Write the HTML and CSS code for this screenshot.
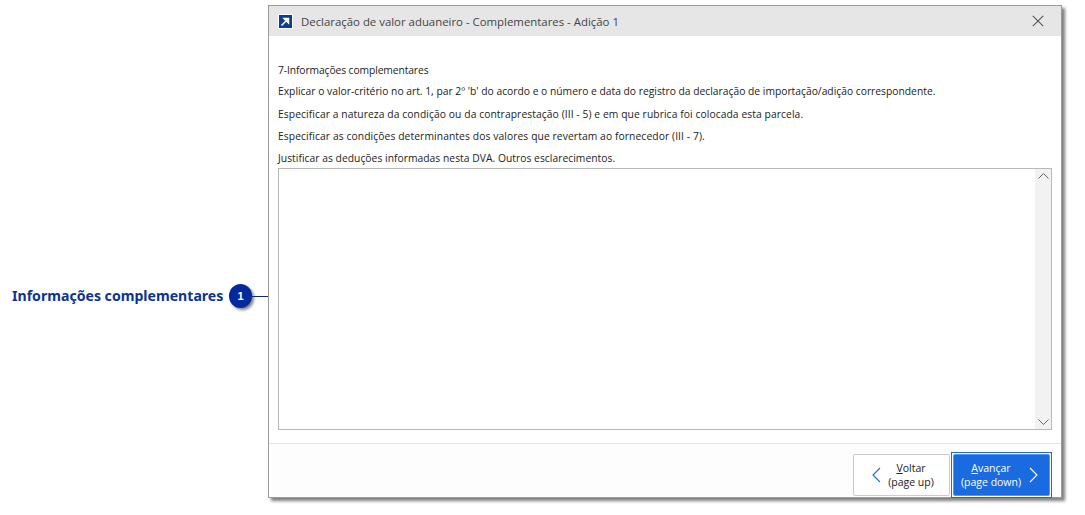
FILE: index.html
```html
<!DOCTYPE html>
<html lang="pt-BR">
<head>
<meta charset="utf-8">
<title>Declaração de valor aduaneiro</title>
<link rel="stylesheet" href="styles.css">
</head>
<body>
<main class="page">
  <div class="callout">
    <span class="callout-label">Informações complementares</span>
    <span class="badge">1</span>
    <span class="leader"></span>
  </div>
  <section class="window">
    <header class="titlebar">
      <svg class="app-icon" width="15" height="15" viewBox="0 0 15 15" aria-hidden="true">
        <rect width="15" height="15" fill="#fff"/>
        <rect x="1" y="1" width="13" height="13" fill="#0b3d91"/>
        <path d="M3.5 11.5L9 6M6 4.5h4.5V9z" stroke="#fff" stroke-width="1.5" fill="#fff"/>
      </svg>
      <h1 class="title">Declaração de valor aduaneiro - Complementares - Adição 1</h1>
      <svg class="close" width="12" height="12" viewBox="0 0 12 12" aria-hidden="true">
        <path d="M.8.8l10.4 10.4M11.2.8L.8 11.2" stroke="#555" stroke-width="1.1" fill="none"/>
      </svg>
    </header>
    <div class="content">
      <p class="line first">7-Informações complementares</p>
      <p class="line second">Explicar o valor-critério no art. 1, par 2º 'b' do acordo e o número e data do registro da declaração de importação/adição correspondente.</p>
      <p class="line third">Especificar a natureza da condição ou da contraprestação (III - 5) e em que rubrica foi colocada esta parcela.</p>
      <p class="line fourth">Especificar as condições determinantes dos valores que revertam ao fornecedor (III - 7).</p>
      <p class="line fifth">Justificar as deduções informadas nesta DVA. Outros esclarecimentos.</p>
      <div class="memo">
        <div class="memo-text"></div>
        <div class="scrollbar">
          <svg width="11" height="6" viewBox="0 0 11 6" aria-hidden="true"><path d="M.5 5.5l5-5 5 5" stroke="#666" fill="none"/></svg>
          <svg width="11" height="6" viewBox="0 0 11 6" aria-hidden="true"><path d="M.5.5l5 5 5-5" stroke="#666" fill="none"/></svg>
        </div>
      </div>
    </div>
    <footer class="footer">
      <button class="btn" type="button">
        <svg width="9" height="16" viewBox="0 0 9 16" aria-hidden="true"><path d="M8 1L1 8l7 7" stroke="#1a6ae0" stroke-width="1.1" fill="none"/></svg>
        <span class="btn-text"><u>V</u>oltar<br>(page up)</span>
      </button>
      <div class="focus-ring">
        <button class="btn primary" type="button">
          <span class="btn-text"><u>A</u>vançar<br>(page down)</span>
          <svg width="9" height="16" viewBox="0 0 9 16" aria-hidden="true"><path d="M1 1l7 7-7 7" stroke="#fff" stroke-width="1.1" fill="none"/></svg>
        </button>
      </div>
    </footer>
  </section>
</main>
</body>
</html>
```
FILE: styles.css
```css
* { box-sizing: border-box; }
html, body { margin: 0; height: 100%; background: #fff; }
body { font-family: "Open Sans", "Noto Sans", sans-serif; color: #222; overflow: hidden; }
.page { display: flex; align-items: flex-start; padding-top: 5px; }

.callout { width: 268px; flex: none; display: flex; align-items: center; margin-top: 279px; padding-left: 12px; }
.callout-label { font-family: "Noto Sans", sans-serif; font-weight: 700; font-size: 14.1px; line-height: 22px; color: #0a3492; white-space: nowrap; width: 217px; }
.badge { width: 23px; height: 24px; flex: none; border-radius: 50%; background: #002a9b; color: #fff; font: 700 11px/24px "Liberation Sans", sans-serif; text-align: center; box-shadow: 2px 2px 3px rgba(0,0,0,.5); }
.leader { height: 1px; width: 16px; background: #0a2a80; }

.window { width: 794px; height: 493px; flex: none; display: flex; flex-direction: column; background: #fff; border: 1px solid #9a9a9a; box-shadow: 3px 3px 3px rgba(0,0,0,.5); }
.titlebar { height: 30px; flex: none; background: #e6e6e6; display: flex; align-items: center; padding: 0 17px 0 9px; }
.app-icon { flex: none; }
.title { flex: 1; margin: 0 0 0 8px; font-weight: 400; font-size: 11.4px; color: #444; }
.close { flex: none; }

.content { flex: 1; display: flex; flex-direction: column; padding: 0 9px 13px 9px; min-height: 0; }
.line { margin: 0; font-size: 10.3px; line-height: 22px; height: 22px; white-space: nowrap; color: #222; }
.first { margin-top: 23px; letter-spacing: -.1px; }
.second { margin-top: -1px; margin-bottom: 1px; }
.third { letter-spacing: .08px; }
.fourth { letter-spacing: .09px; }
.fifth { letter-spacing: .03px; }
.memo { flex: 1; display: flex; border: 1px solid #b9b9b9; min-height: 0; margin-top: -1px; }
.memo-text { flex: 1; }
.scrollbar { width: 16px; background: #f2f2f2; display: flex; flex-direction: column; justify-content: space-between; align-items: center; padding: 4px 0 4px; }

.footer { height: 54px; flex: none; border-top: 1px solid #e3e3e3; background: #fdfdfd; display: flex; justify-content: flex-end; align-items: flex-start; padding: 10px 9px 0 0; }
.btn { font: 400 10.5px/14px "Open Sans", "Noto Sans", sans-serif; color: #222; width: 97px; height: 42px; border: 1px solid #ccc; border-radius: 2px; background: #fff; display: flex; align-items: center; justify-content: space-between; padding: 0 11px 0 18px; }
.btn-text { flex: 1; text-align: center; padding-left: 3px; white-space: nowrap; }
.focus-ring { border: 1px solid #1a6ae0; padding: 1px; margin: -2px 0 0 1px; }
.primary { background: #1a6ae0; color: #fff; border-color: #5b93e8; padding: 0 11px 0 3px; }
.primary .btn-text { padding-left: 0; padding-right: 4px; }
```
